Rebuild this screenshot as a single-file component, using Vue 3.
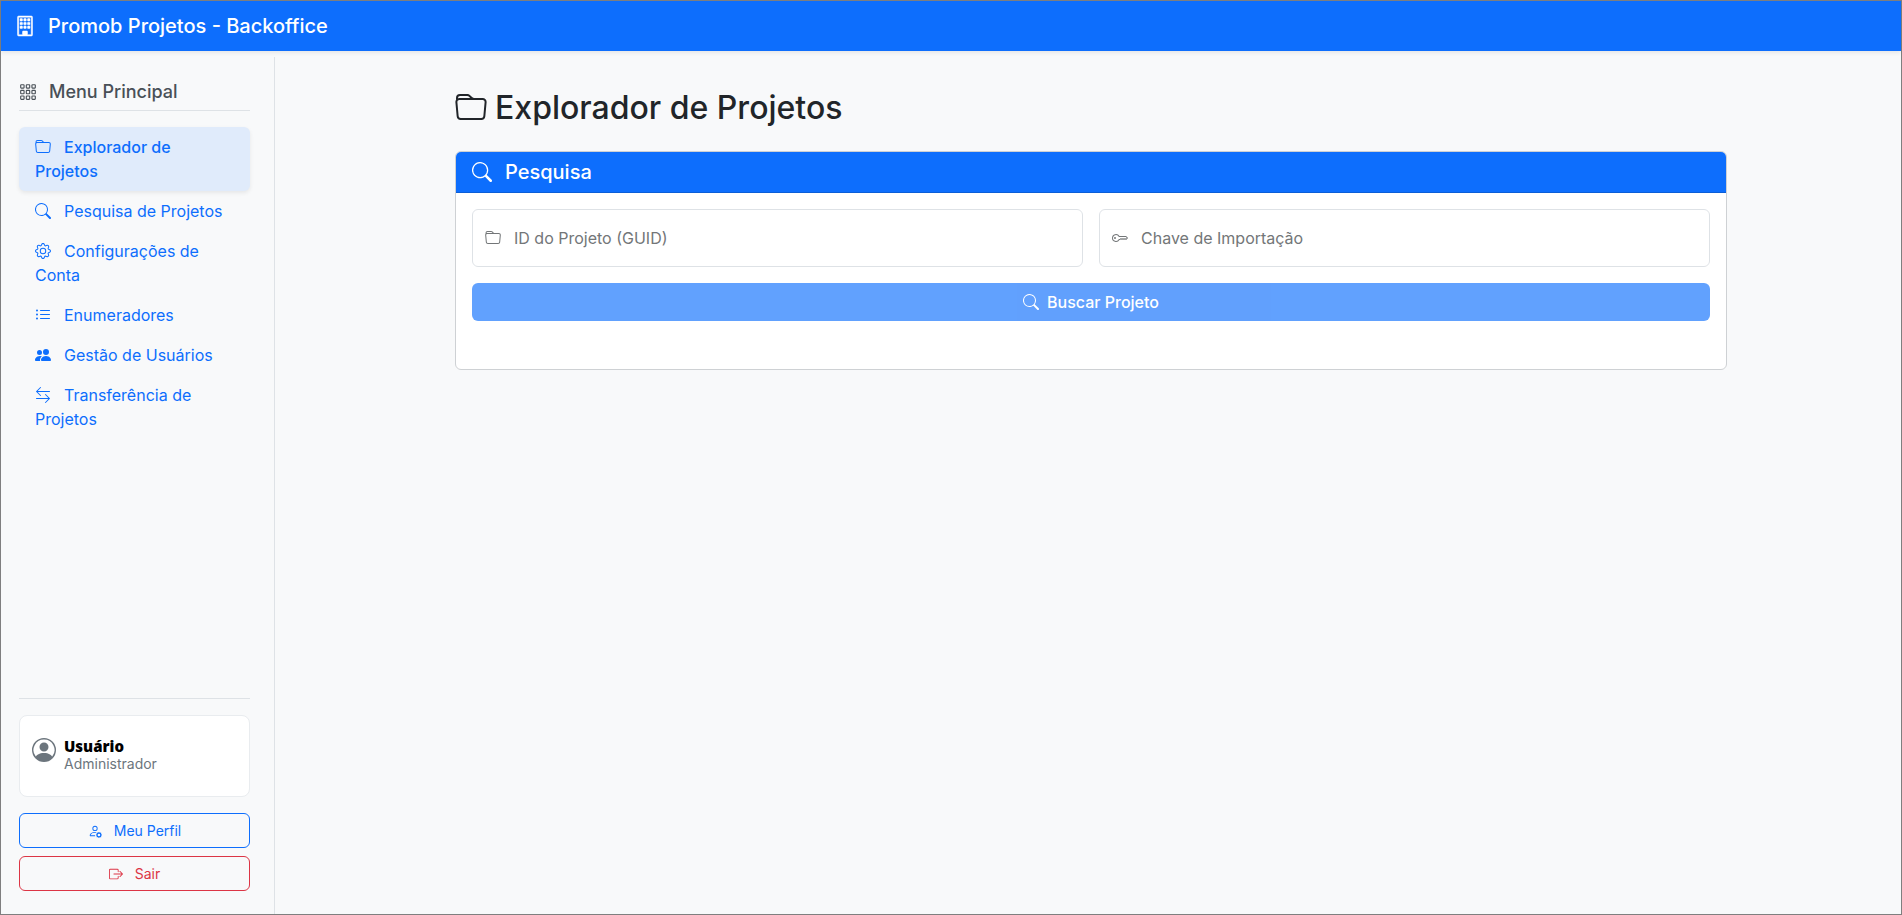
<script setup>
import { ref } from 'vue'

const icons = {
  building: 'M4 2.5a.5.5 0 0 1 .5-.5h1a.5.5 0 0 1 .5.5v1a.5.5 0 0 1-.5.5h-1a.5.5 0 0 1-.5-.5zm3 0a.5.5 0 0 1 .5-.5h1a.5.5 0 0 1 .5.5v1a.5.5 0 0 1-.5.5h-1a.5.5 0 0 1-.5-.5zm3.5-.5a.5.5 0 0 0-.5.5v1a.5.5 0 0 0 .5.5h1a.5.5 0 0 0 .5-.5v-1a.5.5 0 0 0-.5-.5zM4 5.5a.5.5 0 0 1 .5-.5h1a.5.5 0 0 1 .5.5v1a.5.5 0 0 1-.5.5h-1a.5.5 0 0 1-.5-.5zM7.5 5a.5.5 0 0 0-.5.5v1a.5.5 0 0 0 .5.5h1a.5.5 0 0 0 .5-.5v-1a.5.5 0 0 0-.5-.5zm2.5.5a.5.5 0 0 1 .5-.5h1a.5.5 0 0 1 .5.5v1a.5.5 0 0 1-.5.5h-1a.5.5 0 0 1-.5-.5zM4.5 8a.5.5 0 0 0-.5.5v1a.5.5 0 0 0 .5.5h1a.5.5 0 0 0 .5-.5v-1a.5.5 0 0 0-.5-.5zm2.5.5a.5.5 0 0 1 .5-.5h1a.5.5 0 0 1 .5.5v1a.5.5 0 0 1-.5.5h-1a.5.5 0 0 1-.5-.5zm3.5-.5a.5.5 0 0 0-.5.5v1a.5.5 0 0 0 .5.5h1a.5.5 0 0 0 .5-.5v-1a.5.5 0 0 0-.5-.5zM2 1a1 1 0 0 1 1-1h10a1 1 0 0 1 1 1v14a1 1 0 0 1-1 1H3a1 1 0 0 1-1-1zm11 0H3v14h3v-2.5a.5.5 0 0 1 .5-.5h3a.5.5 0 0 1 .5.5V15h3z',
  grid: 'M4 2v2H2V2zm1 12v-2a1 1 0 0 0-1-1H2a1 1 0 0 0-1 1v2a1 1 0 0 0 1 1h2a1 1 0 0 0 1-1m0-5V7a1 1 0 0 0-1-1H2a1 1 0 0 0-1 1v2a1 1 0 0 0 1 1h2a1 1 0 0 0 1-1m0-5V2a1 1 0 0 0-1-1H2a1 1 0 0 0-1 1v2a1 1 0 0 0 1 1h2a1 1 0 0 0 1-1m5 10v-2a1 1 0 0 0-1-1H7a1 1 0 0 0-1 1v2a1 1 0 0 0 1 1h2a1 1 0 0 0 1-1m0-5V7a1 1 0 0 0-1-1H7a1 1 0 0 0-1 1v2a1 1 0 0 0 1 1h2a1 1 0 0 0 1-1m0-5V2a1 1 0 0 0-1-1H7a1 1 0 0 0-1 1v2a1 1 0 0 0 1 1h2a1 1 0 0 0 1-1M9 2v2H7V2zm5 0v2h-2V2zM4 7v2H2V7zm5 0v2H7V7zm5 0h-2v2h2zM4 12v2H2v-2zm5 0v2H7v-2zm5 0v2h-2v-2zM12 1a1 1 0 0 0-1 1v2a1 1 0 0 0 1 1h2a1 1 0 0 0 1-1V2a1 1 0 0 0-1-1zm-1 6a1 1 0 0 1 1-1h2a1 1 0 0 1 1 1v2a1 1 0 0 1-1 1h-2a1 1 0 0 1-1-1zm1 4a1 1 0 0 0-1 1v2a1 1 0 0 0 1 1h2a1 1 0 0 0 1-1v-2a1 1 0 0 0-1-1z',
  folder: 'M.54 3.87.5 3a2 2 0 0 1 2-2h3.672a2 2 0 0 1 1.414.586l.828.828A2 2 0 0 0 9.828 3h3.982a2 2 0 0 1 1.992 2.181l-.637 7A2 2 0 0 1 13.174 14H2.826a2 2 0 0 1-1.991-1.819l-.637-7a2 2 0 0 1 .342-1.31zM2.19 4a1 1 0 0 0-.996 1.09l.637 7a1 1 0 0 0 .995.91h10.348a1 1 0 0 0 .995-.91l.637-7A1 1 0 0 0 13.81 4zm4.69-1.707A1 1 0 0 0 6.172 2H2.5a1 1 0 0 0-1 .981l.006.139q.323-.119.684-.12h5.396z',
  search: 'M11.742 10.344a6.5 6.5 0 1 0-1.397 1.398h-.001q.044.06.098.115l3.85 3.85a1 1 0 0 0 1.415-1.414l-3.85-3.85a1 1 0 0 0-.115-.1zM12 6.5a5.5 5.5 0 1 1-11 0 5.5 5.5 0 0 1 11 0',
  gear: 'M8 4.754a3.246 3.246 0 1 0 0 6.492 3.246 3.246 0 0 0 0-6.492M5.754 8a2.246 2.246 0 1 1 4.492 0 2.246 2.246 0 0 1-4.492 0M9.796 1.343c-.527-1.79-3.065-1.79-3.592 0l-.094.319a.873.873 0 0 1-1.255.52l-.292-.16c-1.64-.892-3.433.902-2.54 2.541l.159.292a.873.873 0 0 1-.52 1.255l-.319.094c-1.79.527-1.79 3.065 0 3.592l.319.094a.873.873 0 0 1 .52 1.255l-.16.292c-.892 1.64.901 3.434 2.541 2.54l.292-.159a.873.873 0 0 1 1.255.52l.094.319c.527 1.79 3.065 1.79 3.592 0l.094-.319a.873.873 0 0 1 1.255-.52l.292.16c1.64.893 3.434-.902 2.54-2.541l-.159-.292a.873.873 0 0 1 .52-1.255l.319-.094c1.79-.527 1.79-3.065 0-3.592l-.319-.094a.873.873 0 0 1-.52-1.255l.16-.292c.893-1.64-.902-3.433-2.541-2.54l-.292.159a.873.873 0 0 1-1.255-.52zm-2.633.283c.246-.835 1.428-.835 1.674 0l.094.319a1.873 1.873 0 0 0 2.693 1.115l.291-.16c.764-.415 1.6.42 1.184 1.185l-.159.292a1.873 1.873 0 0 0 1.116 2.692l.318.094c.835.246.835 1.428 0 1.674l-.319.094a1.873 1.873 0 0 0-1.115 2.693l.16.291c.415.764-.42 1.6-1.185 1.184l-.291-.159a1.873 1.873 0 0 0-2.693 1.116l-.094.318c-.246.835-1.428.835-1.674 0l-.094-.319a1.873 1.873 0 0 0-2.692-1.115l-.292.16c-.764.415-1.6-.42-1.184-1.185l.159-.291A1.873 1.873 0 0 0 1.945 8.93l-.319-.094c-.835-.246-.835-1.428 0-1.674l.319-.094A1.873 1.873 0 0 0 3.06 4.377l-.16-.292c-.415-.764.42-1.6 1.185-1.184l.292.159a1.873 1.873 0 0 0 2.692-1.115z',
  list: 'M5 11.5a.5.5 0 0 1 .5-.5h9a.5.5 0 0 1 0 1h-9a.5.5 0 0 1-.5-.5m0-4a.5.5 0 0 1 .5-.5h9a.5.5 0 0 1 0 1h-9a.5.5 0 0 1-.5-.5m0-4a.5.5 0 0 1 .5-.5h9a.5.5 0 0 1 0 1h-9a.5.5 0 0 1-.5-.5m-3 1a1 1 0 1 0 0-2 1 1 0 0 0 0 2m0 4a1 1 0 1 0 0-2 1 1 0 0 0 0 2m0 4a1 1 0 1 0 0-2 1 1 0 0 0 0 2',
  people: 'M7 14s-1 0-1-1 1-4 5-4 5 3 5 4-1 1-1 1zm4-6a3 3 0 1 0 0-6 3 3 0 0 0 0 6m-5.784 6A2.24 2.24 0 0 1 5 13c0-1.355.68-2.75 1.936-3.72A6.3 6.3 0 0 0 5 9c-4 0-5 3-5 4s1 1 1 1zM4.5 8a2.5 2.5 0 1 0 0-5 2.5 2.5 0 0 0 0 5',
  transfer: 'M1 11.5a.5.5 0 0 0 .5.5h11.793l-3.147 3.146a.5.5 0 0 0 .708.708l4-4a.5.5 0 0 0 0-.708l-4-4a.5.5 0 0 0-.708.708L13.293 11H1.5a.5.5 0 0 0-.5.5m14-7a.5.5 0 0 1-.5.5H2.707l3.147 3.146a.5.5 0 1 1-.708.708l-4-4a.5.5 0 0 1 0-.708l4-4a.5.5 0 1 1 .708.708L2.707 4H14.5a.5.5 0 0 1 .5.5',
  person: 'M11 6a3 3 0 1 1-6 0 3 3 0 0 1 6 0M0 8a8 8 0 1 1 16 0A8 8 0 0 1 0 8m8-7a7 7 0 0 0-5.468 11.37C3.242 11.226 4.805 10 8 10s4.757 1.225 5.468 2.37A7 7 0 0 0 8 1',
  personGear: 'M11 5a3 3 0 1 1-6 0 3 3 0 0 1 6 0M8 7a2 2 0 1 0 0-4 2 2 0 0 0 0 4m.256 7a4.5 4.5 0 0 1-.229-1.004H3c.001-.246.154-.986.832-1.664C4.484 10.68 5.711 10 8 10q.39 0 .74.025c.226-.341.496-.65.804-.918Q8.844 9.002 8 9c-5 0-6 3-6 4s1 1 1 1zm3.63-4.54c.18-.613 1.048-.613 1.229 0l.043.148a.64.64 0 0 0 .921.382l.136-.074c.561-.306 1.175.308.87.869l-.075.136a.64.64 0 0 0 .382.92l.149.045c.612.18.612 1.048 0 1.229l-.15.043a.64.64 0 0 0-.38.921l.074.136c.305.561-.309 1.175-.87.87l-.136-.075a.64.64 0 0 0-.92.382l-.045.149c-.18.612-1.048.612-1.229 0l-.043-.15a.64.64 0 0 0-.921-.38l-.136.074c-.561.305-1.175-.309-.87-.87l.075-.136a.64.64 0 0 0-.382-.92l-.148-.045c-.613-.18-.613-1.048 0-1.229l.148-.043a.64.64 0 0 0 .382-.921l-.074-.136c-.306-.561.308-1.175.869-.87l.136.075a.64.64 0 0 0 .92-.382zM14 12.5a1.5 1.5 0 1 0-3 0 1.5 1.5 0 0 0 3 0',
  exit: 'M10 12.5a.5.5 0 0 1-.5.5h-8a.5.5 0 0 1-.5-.5v-9a.5.5 0 0 1 .5-.5h8a.5.5 0 0 1 .5.5v2a.5.5 0 0 0 1 0v-2A1.5 1.5 0 0 0 9.5 2h-8A1.5 1.5 0 0 0 0 3.5v9A1.5 1.5 0 0 0 1.5 14h8a1.5 1.5 0 0 0 1.5-1.5v-2a.5.5 0 0 0-1 0zM15.854 8.354a.5.5 0 0 0 0-.708l-3-3a.5.5 0 0 0-.708.708L14.293 7.5H5.5a.5.5 0 0 0 0 1h8.793l-2.147 2.146a.5.5 0 0 0 .708.708z',
  key: 'M0 8a4 4 0 0 1 7.465-2H14a.5.5 0 0 1 .354.146l1.5 1.5a.5.5 0 0 1 0 .708l-1.5 1.5a.5.5 0 0 1-.708 0L13 9.207l-.646.647a.5.5 0 0 1-.708 0L11 9.207l-.646.647a.5.5 0 0 1-.708 0L9 9.207l-.646.647A.5.5 0 0 1 8 10h-.535A4 4 0 0 1 0 8m4-3a3 3 0 1 0 2.712 4.285A.5.5 0 0 1 7.163 9h.63l.853-.854a.5.5 0 0 1 .708 0l.646.647.646-.647a.5.5 0 0 1 .708 0l.646.647.646-.647a.5.5 0 0 1 .708 0l.646.647.793-.793-1-1h-6.63a.5.5 0 0 1-.451-.285A3 3 0 0 0 4 5M4 8a1 1 0 1 1-2 0 1 1 0 0 1 2 0'
}

const menu = [
  { label: 'Explorador de Projetos', icon: 'folder', active: true },
  { label: 'Pesquisa de Projetos', icon: 'search' },
  { label: 'Configurações de Conta', icon: 'gear' },
  { label: 'Enumeradores', icon: 'list' },
  { label: 'Gestão de Usuários', icon: 'people' },
  { label: 'Transferência de Projetos', icon: 'transfer' }
]

const projectId = ref('')
const importKey = ref('')
</script>

<template>
  <div class="app">
    <header class="topbar">
      <svg class="icon" viewBox="0 0 16 16" aria-hidden="true"><path :d="icons.building" /></svg>
      <span>Promob Projetos - Backoffice</span>
    </header>

    <div class="layout">
      <aside class="sidebar">
        <h2 class="menu-title">
          <svg class="icon" viewBox="0 0 16 16" aria-hidden="true"><path :d="icons.grid" /></svg>
          <span>Menu Principal</span>
        </h2>
        <nav class="menu">
          <a v-for="item in menu" :key="item.label" href="#" class="menu-link" :class="{ active: item.active }"><svg class="icon" viewBox="0 0 16 16" aria-hidden="true"><path :d="icons[item.icon]" /></svg>{{ item.label }}</a>
        </nav>
        <div class="account">
          <div class="user">
            <svg class="icon" viewBox="0 0 16 16" aria-hidden="true"><path fill-rule="evenodd" :d="icons.person" /></svg>
            <div>
              <div class="user-name">Usuário</div>
              <div class="user-role">Administrador</div>
            </div>
          </div>
          <button type="button" class="btn btn-profile">
            <svg class="icon" viewBox="0 0 16 16" aria-hidden="true"><path :d="icons.personGear" /></svg>Meu Perfil
          </button>
          <button type="button" class="btn btn-exit">
            <svg class="icon" viewBox="0 0 16 16" aria-hidden="true"><path :d="icons.exit" /></svg>Sair
          </button>
        </div>
      </aside>

      <main class="content">
        <div class="container">
          <h1 class="page-title">
            <svg class="icon" viewBox="0 0 16 16" aria-hidden="true"><path :d="icons.folder" /></svg>
            <span>Explorador de Projetos</span>
          </h1>
          <section class="card">
            <h2 class="card-header">
              <svg class="icon" viewBox="0 0 16 16" aria-hidden="true"><path :d="icons.search" /></svg>
              <span>Pesquisa</span>
            </h2>
            <form class="card-body" @submit.prevent>
              <div class="fields">
                <div class="field">
                  <input id="project-id" v-model="projectId" type="text" />
                  <label v-show="!projectId" for="project-id">
                    <svg class="icon" viewBox="0 0 16 16" aria-hidden="true"><path :d="icons.folder" /></svg>ID do Projeto (GUID)
                  </label>
                </div>
                <div class="field">
                  <input id="import-key" v-model="importKey" type="text" />
                  <label v-show="!importKey" for="import-key">
                    <svg class="icon" viewBox="0 0 16 16" aria-hidden="true"><path :d="icons.key" /></svg>Chave de Importação
                  </label>
                </div>
              </div>
              <button type="submit" class="submit" :disabled="!projectId && !importKey">
                <svg class="icon" viewBox="0 0 16 16" aria-hidden="true"><path :d="icons.search" /></svg>Buscar Projeto
              </button>
            </form>
          </section>
        </div>
      </main>
    </div>
  </div>
</template>

<style>
body {
  margin: 0;
}
</style>

<style scoped>
* {
  box-sizing: border-box;
}
.app {
  display: flex;
  flex-direction: column;
  min-height: 100vh;
  border: 1px solid #7f7f7f;
  background: #f8f9fa;
  color: #212529;
  font-family: Inter, "Liberation Sans", sans-serif;
  font-size: 16px;
  line-height: 24px;
}
h1,
h2 {
  margin: 0;
}
.icon {
  width: 16px;
  height: 16px;
  flex: none;
  fill: currentColor;
}
.topbar {
  display: flex;
  align-items: center;
  gap: 13px;
  height: 50px;
  padding: 0 14px;
  background: #0d6efd;
  color: #fff;
  font-size: 20px;
  font-weight: 500;
  box-shadow: 0 2px 4px rgba(0, 0, 0, 0.075);
}
.topbar .icon {
  width: 20px;
  height: 20px;
  overflow: visible;
  stroke: currentColor;
  stroke-width: 0.4;
}
.layout {
  display: flex;
  flex: 1;
  padding-top: 6px;
}
.sidebar {
  display: flex;
  flex-direction: column;
  width: 274px;
  padding: 24px 24px 23px 18px;
  border-right: 1px solid #dee2e6;
}
.menu-title {
  display: flex;
  align-items: center;
  gap: 12px;
  height: 30px;
  padding-bottom: 8px;
  margin-bottom: 16px;
  border-bottom: 1px solid #dee2e6;
  color: #495057;
  font-size: 18px;
  font-weight: 500;
}
.menu-title .icon {
  width: 18px;
  height: 18px;
}
.menu {
  display: flex;
  flex-direction: column;
}
.menu-link {
  padding: 8px 16px;
  border-radius: 6px;
  color: #0d6efd;
  text-decoration: none;
}
.menu-link .icon {
  margin-right: 13px;
  vertical-align: -2px;
}
.menu-link.active {
  background: #e0ebfb;
  font-weight: 500;
  box-shadow: 0 2px 4px rgba(0, 0, 0, 0.075);
}
.account {
  display: flex;
  flex-direction: column;
  margin-top: auto;
  padding-top: 16px;
  border-top: 1px solid #dee2e6;
}
.user {
  display: flex;
  align-items: center;
  gap: 8px;
  height: 82px;
  padding: 0 12px;
  margin-bottom: 16px;
  border: 1px solid #e9ecef;
  border-radius: 8px;
  background: #fff;
}
.user .icon {
  width: 24px;
  height: 24px;
  color: #6c757d;
  margin-bottom: 12px;
}
.user-name {
  color: #000;
  font-family: "Noto Sans", "Open Sans", sans-serif;
  font-size: 15px;
  font-weight: 900;
  line-height: 16px;
}
.user-role {
  color: #6c757d;
  font-size: 14px;
  line-height: 20px;
}
.btn {
  display: flex;
  align-items: center;
  justify-content: center;
  height: 35px;
  border: 1px solid;
  border-radius: 6px;
  background: transparent;
  font-family: inherit;
  font-size: 14px;
}
.btn .icon {
  width: 14px;
  height: 14px;
  margin-right: 12px;
}
.btn-profile {
  margin-bottom: 8px;
  border-color: #0d6efd;
  color: #0d6efd;
}
.btn-exit {
  border-color: #dc3545;
  color: #dc3545;
}
.content {
  flex: 1;
  min-width: 0;
  padding: 32px 0 24px 6px;
}
.container {
  max-width: 1320px;
  margin: 0 auto;
  padding: 0 24px;
}
.page-title {
  display: flex;
  align-items: center;
  gap: 8px;
  margin-bottom: 24px;
  font-size: 32px;
  font-weight: 500;
  line-height: 38px;
}
.page-title .icon {
  width: 32px;
  height: 32px;
}
.card {
  border: 1px solid #ced1d4;
  border-radius: 6px;
  background: #fff;
  overflow: hidden;
}
.card-header {
  display: flex;
  align-items: center;
  gap: 13px;
  padding: 8px 16px;
  border-bottom: 1px solid #0b5ed7;
  background: #0d6efd;
  color: #fff;
  font-size: 20px;
  font-weight: 500;
}
.card-header .icon {
  width: 20px;
  height: 20px;
}
.card-body {
  padding: 16px 16px 48px;
}
.fields {
  display: grid;
  grid-template-columns: 1fr 1fr;
  gap: 16px;
  margin-bottom: 16px;
}
.field {
  position: relative;
}
.field input {
  display: block;
  width: 100%;
  height: 58px;
  padding: 0 12px;
  border: 1px solid #dee2e6;
  border-radius: 6px;
  background: #fff;
  color: #212529;
  font: inherit;
}
.field label {
  position: absolute;
  inset: 0;
  display: flex;
  align-items: center;
  padding: 0 13px;
  color: #737678;
  pointer-events: none;
}
.field .icon {
  margin-right: 13px;
}
.submit {
  display: flex;
  align-items: center;
  justify-content: center;
  gap: 8px;
  width: 100%;
  height: 38px;
  border: 0;
  border-radius: 6px;
  background: #0d6efd;
  color: #fff;
  font-family: inherit;
  font-size: 16px;
  font-weight: 500;
}
.submit:disabled {
  opacity: 0.65;
}
</style>
